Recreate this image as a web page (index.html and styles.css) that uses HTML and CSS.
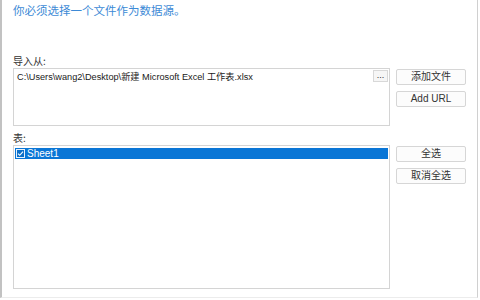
FILE: index.html
```html
<!DOCTYPE html>
<html>
<head>
<meta charset="utf-8">
<link rel="stylesheet" href="styles.css">
</head>
<body>
<div class="window">
  <div class="title">你必须选择一个文件作为数据源。</div>
  <div class="label label-import">导入从:</div>
  <div class="row">
    <div class="pathbox">
      <span class="path">C:\Users\wang2\Desktop\新建 Microsoft Excel 工作表.xlsx</span>
      <button class="dots">...</button>
    </div>
    <div class="btns">
      <button class="btn">添加文件</button>
      <button class="btn">Add URL</button>
    </div>
  </div>
  <div class="label label-table">表:</div>
  <div class="row">
    <div class="listbox">
      <div class="item">
        <svg class="check" width="9" height="9" viewBox="0 0 9 9"><rect x="0.5" y="0.5" width="8" height="8" fill="#0a6fc9" stroke="#e8f1fb" stroke-width="1"/><path d="M2 4.6 L3.7 6.3 L7 2.6" fill="none" stroke="#ffffff" stroke-width="1.1"/></svg>
        <span>Sheet1</span>
      </div>
    </div>
    <div class="btns">
      <button class="btn">全选</button>
      <button class="btn">取消全选</button>
    </div>
  </div>
</div>
</body>
</html>
```
FILE: styles.css
```css
* { box-sizing: border-box; }
html, body { margin: 0; padding: 0; background: #ffffff; }
body {
  width: 480px;
  height: 300px;
  overflow: hidden;
  font-family: "Liberation Sans", "Noto Sans CJK SC", sans-serif;
  color: #222;
}
.window {
  width: 478px;
  height: 298px;
  border-left: 2px solid #c2c2c2;
  border-right: 1px solid #d0d0d0;
  border-bottom: 1px solid #ececec;
  padding-left: 11px;
}
.title {
  font-family: "Noto Sans CJK SC", sans-serif;
  font-size: 11.5px;
  line-height: 14px;
  padding-top: 3px;
  color: #3d8ad6;
}
.label {
  font-family: "Noto Sans CJK SC", sans-serif;
  font-size: 10px;
  line-height: 12px;
  color: #333;
}
.label-import { margin-top: 38px; margin-bottom: 1px; }
.label-table { margin-top: 6px; margin-bottom: 1px; }
.row {
  display: grid;
  grid-template-columns: 377px 70px;
  column-gap: 6px;
}
.pathbox {
  height: 58px;
  border: 1px solid #d4d4d4;
  display: flex;
  align-items: flex-start;
  justify-content: space-between;
  padding: 1px 1px 0 3px;
}
.path {
  font-size: 9.2px;
  line-height: 13px;
  padding-top: 1px;
  color: #1a1a1a;
  font-family: "Liberation Sans", "Noto Sans CJK SC", sans-serif;
}
.dots {
  width: 15px;
  height: 12px;
  border: 1px solid #d8d8d8;
  background: #f6f6f6;
  font-size: 9px;
  line-height: 8px;
  padding: 0 0 3px 0;
  color: #333;
  font-family: "Liberation Sans", sans-serif;
}
.btns {
  display: flex;
  flex-direction: column;
  gap: 6px;
  padding-top: 1px;
}
.btn {
  height: 16px;
  width: 70px;
  border: 1px solid #d6d6d6;
  border-radius: 2px;
  background: #fcfcfc;
  font-family: "Liberation Sans", "Noto Sans CJK SC", sans-serif;
  font-size: 10px;
  line-height: 12px;
  color: #333;
  padding: 0;
}
.listbox {
  height: 144px;
  border: 1px solid #d4d4d4;
  padding: 2px 1px;
}
.item {
  height: 11px;
  background: #0a76d6;
  color: #ffffff;
  display: flex;
  align-items: center;
  gap: 2px;
  padding-left: 1px;
  font-size: 10px;
  line-height: 11px;
}
.check { display: block; }
```
